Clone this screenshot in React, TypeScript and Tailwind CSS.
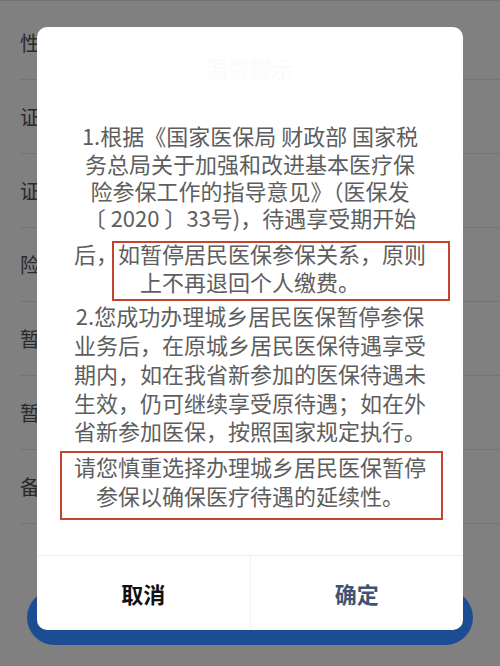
import React from "react";

const rows = ["性", "证", "证", "险", "暂", "暂", "备"];

// each line of the notice, with its top margin in px (gaps widen around the red boxes)
const lines: { text: string; mt: number }[] = [
  { text: "1.根据《国家医保局 财政部 国家税", mt: 0 },
  { text: "务总局关于加强和改进基本医疗保", mt: 0 },
  { text: "险参保工作的指导意见》（医保发", mt: -1 },
  { text: "〔 2020 〕33号)，待遇享受期开始", mt: -1 },
  { text: "后，如暂停居民医保参保关系，原则", mt: 8 },
  { text: "上不再退回个人缴费。", mt: 0 },
  { text: "2.您成功办理城乡居民医保暂停参保", mt: 6 },
  { text: "业务后，在原城乡居民医保待遇享受", mt: 1 },
  { text: "期内，如在我省新参加的医保待遇未", mt: 1 },
  { text: "生效，仍可继续享受原待遇；如在外", mt: 1 },
  { text: "省新参加医保，按照国家规定执行。", mt: 0 },
  { text: "请您慎重选择办理城乡居民医保暂停", mt: 8 },
  { text: "参保以确保医疗待遇的延续性。", mt: 1 },
];

export default function App() {
  return (
    <div
      className="relative w-[500px] h-[666px] overflow-hidden bg-[#808080]"
      style={{ fontFamily: '"Noto Sans CJK SC", "Noto Sans", sans-serif' }}
    >
      {/* background form, already dimmed by the mask */}
      <div className="flex flex-col pt-[5px] border-t border-[#737373]">
        {rows.map((label, i) => (
          <div
            key={i}
            className="h-[74px] ml-[20px] flex items-center border-b border-[#747474] text-[20px] text-[#2a2a2a]"
          >
            {label}
          </div>
        ))}
      </div>
      <div className="absolute left-[27px] top-[590px] w-[446px] h-[55px] rounded-full bg-[#1c4d93]" />

      {/* dialog */}
      <div className="absolute left-[37px] top-[27px] w-[426px] h-[603px] rounded-[10px] bg-white flex flex-col">
        <div className="h-[94px] flex items-center justify-center text-[22px] text-[#fbfbfb] pb-[14px]">
          温馨提示
        </div>
        <div className="relative flex-1 flex flex-col items-center text-[22px] text-[#5e5e5e]">
          {lines.map((l, i) => (
            <div
              key={i}
              className="h-[28px] leading-[28px] whitespace-nowrap"
              style={{ marginTop: l.mt }}
            >
              {l.text}
            </div>
          ))}
          <div className="absolute left-[75px] top-[120px] w-[338px] h-[60px] border-[2.5px] border-[#c4452f]" />
          <div className="absolute left-[23px] top-[330px] w-[383px] h-[69px] border-[2.5px] border-[#c4452f]" />
        </div>
        <div className="h-[75px] flex border-t border-[#eeeeee] text-[22px] font-bold">
          <div className="flex-1 flex items-center justify-center text-[#111111] border-r border-[#f2f2f2]">
            取消
          </div>
          <div className="flex-1 flex items-center justify-center text-[#3f5373]">确定</div>
        </div>
      </div>
    </div>
  );
}
